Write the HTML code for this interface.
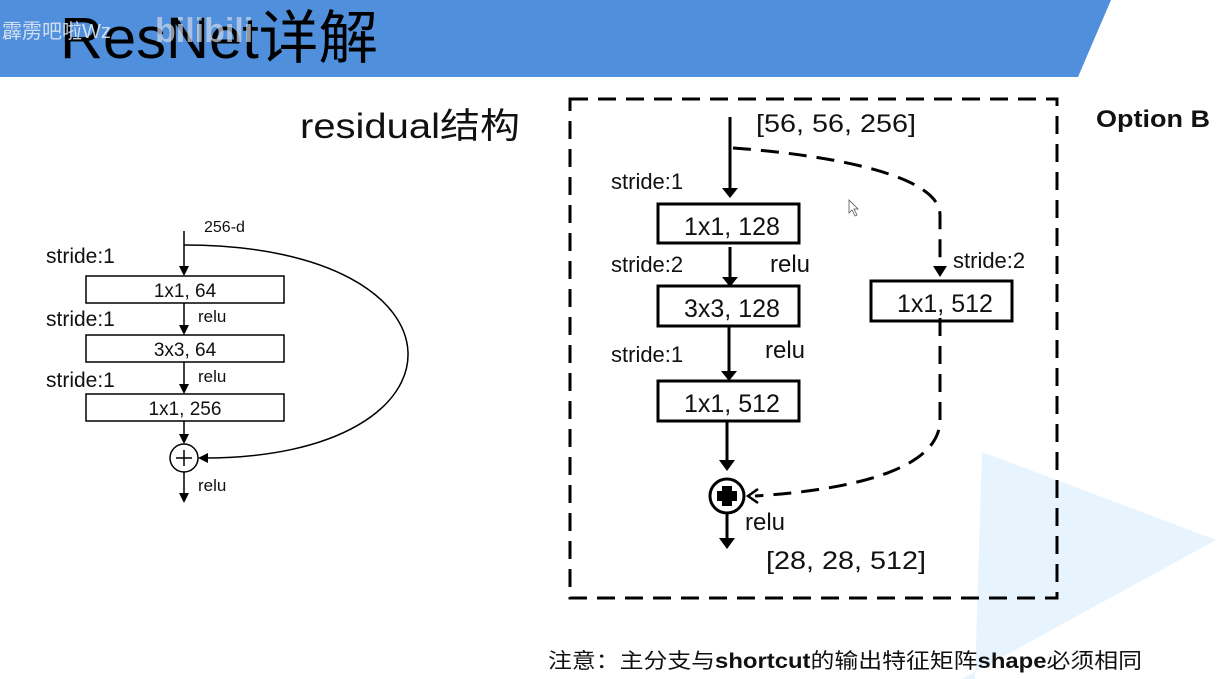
<!DOCTYPE html>
<html><head><meta charset="utf-8"><style>
html,body{margin:0;padding:0;background:#fff;}
svg{display:block;}
text{font-family:"Liberation Sans","Noto Sans CJK SC",sans-serif;}
</style></head><body>
<svg width="1232" height="679" viewBox="0 0 1232 679" xmlns="http://www.w3.org/2000/svg">
<rect width="1232" height="679" fill="#fff"/>
<polygon points="0,0 1111,0 1078,77 0,77" fill="#4f8fdc"/>
<polygon points="982,452 1216,540 962,679 975,679" fill="#e8f4fd"/>
<text x="60" y="58" font-size="58" fill="#000" textLength="318" lengthAdjust="spacingAndGlyphs">ResNet详解</text>
<text x="2" y="38" font-size="20" fill="#e8eef8" opacity="0.85">霹雳吧啦Wz</text>
<text x="155" y="42" font-size="34" fill="#cfd8e6" opacity="0.7" font-weight="bold">bilibili</text>
<text x="300" y="138" font-size="35" fill="#111" textLength="220" lengthAdjust="spacingAndGlyphs">residual结构</text>
<text x="1096" y="127" font-size="24" font-weight="bold" fill="#111" textLength="114" lengthAdjust="spacingAndGlyphs">Option B</text>

<!-- left diagram -->
<g stroke="#000" stroke-width="1.5" fill="none">
<line x1="184" y1="231" x2="184" y2="268"/>
<path d="M184,245 C480,245 480,460 200,458"/>
<rect x="86" y="276" width="198" height="27"/>
<line x1="184" y1="303" x2="184" y2="328"/>
<rect x="86" y="335" width="198" height="27"/>
<line x1="184" y1="362" x2="184" y2="387"/>
<rect x="86" y="394" width="198" height="27"/>
<line x1="184" y1="421" x2="184" y2="437"/>
<circle cx="184" cy="458" r="14"/>
<line x1="176" y1="458" x2="192" y2="458"/><line x1="184" y1="450" x2="184" y2="466"/>
<line x1="184" y1="472" x2="184" y2="495"/>
</g>
<g fill="#000">
<polygon points="179,266 189,266 184,276"/>
<polygon points="179,325 189,325 184,335"/>
<polygon points="179,384 189,384 184,394"/>
<polygon points="179,434 189,434 184,444"/>
<polygon points="208,453 208,463 198,458"/>
<polygon points="179,493 189,493 184,503"/>
</g>
<g font-size="17" fill="#111">
<text x="204" y="232" font-size="16">256-d</text>
<text x="46" y="263" font-size="21">stride:1</text>
<text x="46" y="326" font-size="21">stride:1</text>
<text x="46" y="387" font-size="21">stride:1</text>
<text x="185" y="297" text-anchor="middle" font-size="19">1x1, 64</text>
<text x="185" y="356" text-anchor="middle" font-size="19">3x3, 64</text>
<text x="185" y="415" text-anchor="middle" font-size="19">1x1, 256</text>
<text x="198" y="322">relu</text>
<text x="198" y="382">relu</text>
<text x="198" y="491">relu</text>
</g>

<!-- right diagram -->
<rect x="570" y="99" width="487" height="499" fill="none" stroke="#000" stroke-width="3" stroke-dasharray="18,10"/>
<g stroke="#000" stroke-width="3" fill="none">
<line x1="730" y1="117" x2="730" y2="190"/>
<rect x="658" y="204" width="141" height="39"/>
<line x1="730" y1="247" x2="730" y2="278"/>
<rect x="658" y="286" width="141" height="40"/>
<line x1="729" y1="327" x2="729" y2="372"/>
<rect x="658" y="381" width="141" height="40"/>
<line x1="727" y1="421" x2="727" y2="462"/>
<circle cx="727" cy="496" r="17"/>
<line x1="727" y1="513" x2="727" y2="540"/>
<rect x="871" y="281" width="141" height="40"/>
<path d="M733,148 C830,155 940,175 940,215 L940,268" stroke-dasharray="18,10"/>
<path d="M940,318 L940,420 C940,470 850,490 755,496" stroke-dasharray="18,10"/>
</g>
<g fill="#000">
<polygon points="722,188 738,188 730,198"/>
<polygon points="722,277 738,277 730,287"/>
<polygon points="721,371 737,371 729,381"/>
<polygon points="719,460 735,460 727,471"/>
<polygon points="719,538 735,538 727,549"/>
<polygon points="933,266 947,266 940,277"/>
<rect x="717" y="491" width="20" height="10"/><rect x="722" y="486" width="10" height="20"/>
</g>
<path d="M758,489 L748,496 L758,503" stroke="#000" stroke-width="2.5" fill="none"/>
<g font-size="25" fill="#111">
<text x="756" y="132" textLength="160" lengthAdjust="spacingAndGlyphs">[56, 56, 256]</text>
<text x="611" y="189" font-size="22">stride:1</text>
<text x="611" y="272" font-size="22">stride:2</text>
<text x="611" y="362" font-size="22">stride:1</text>
<text x="770" y="272" font-size="24">relu</text>
<text x="765" y="358" font-size="24">relu</text>
<text x="745" y="530" font-size="24">relu</text>
<text x="953" y="268" font-size="22">stride:2</text>
<text x="684" y="235">1x1, 128</text>
<text x="684" y="317">3x3, 128</text>
<text x="684" y="412">1x1, 512</text>
<text x="897" y="312">1x1, 512</text>
<text x="766" y="569" textLength="160" lengthAdjust="spacingAndGlyphs">[28, 28, 512]</text>
</g>
<path d="M849,200 L849,213 L852,210 L855,216 L857,215 L854,209 L858,209 Z" fill="#fff" stroke="#555" stroke-width="0.8"/>
<text x="548" y="668" font-size="21" fill="#111" textLength="594" lengthAdjust="spacingAndGlyphs">注意：主分支与<tspan font-weight="bold">shortcut</tspan>的输出特征矩阵<tspan font-weight="bold">shape</tspan>必须相同</text>
</svg>
</body></html>
